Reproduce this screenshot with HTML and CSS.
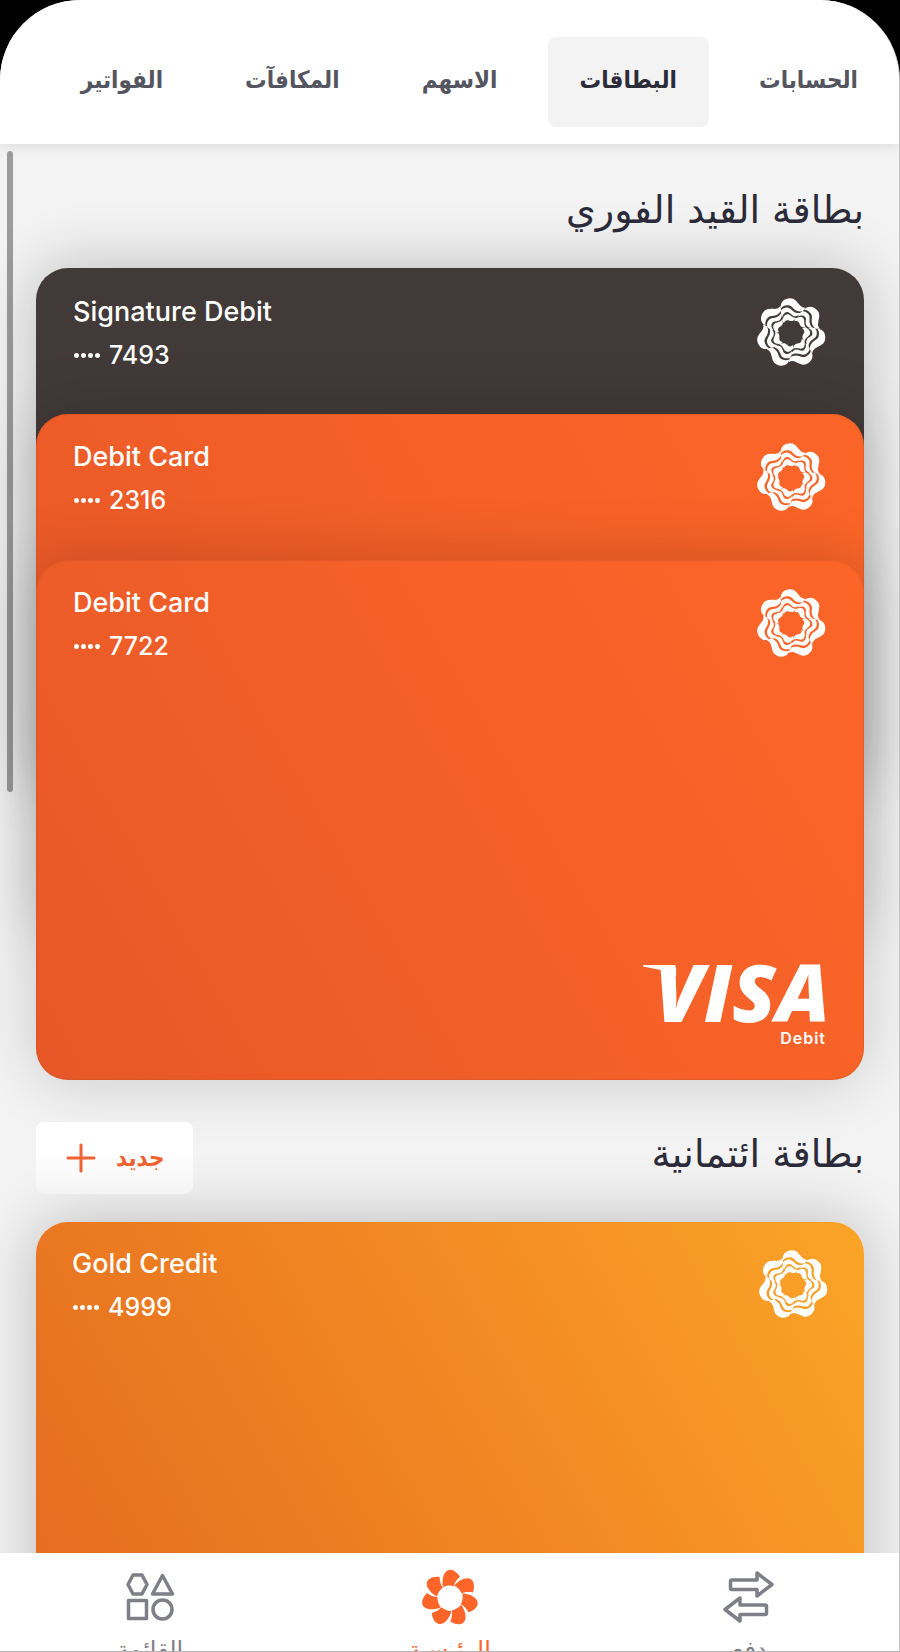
FILE: index.html
```html
<!DOCTYPE html>
<html lang="ar" dir="rtl">
<head>
<meta charset="utf-8">
<meta name="viewport" content="width=device-width, initial-scale=1">
<title>البطاقات</title>
<link rel="stylesheet" href="styles.css">
</head>
<body>
<svg class="defs" aria-hidden="true">
  <defs>
    <g id="wave">
      <path d="M-30-74C-34-92-20-104-2-104C11-104 17-94 24-86C30-78 36-75 44-76L36-66C24-63 16-66 8-73C2-79-2-84-11-83C-20-82-25-80-30-74Z"/>
      <path d="M-30-67C-25-74-17-77-9-76C2-74 8-57 28-60C24-52 13-48 6-52C-1-56-4-64-12-63C-20-62-24-56-26-47C-29-53-31-60-30-67Z"/>
      <path d="M-26-40C-22-51-17-58-9-56C0-54 4-44 15-46C10-36 2-34-5-37C-12-40-18-38-21-30C-24-33-26-36-26-40Z"/>
    </g>
    <symbol id="rosette" viewBox="-105 -105 210 210">
      <use href="#wave"/>
      <use href="#wave" transform="rotate(51.43)"/>
      <use href="#wave" transform="rotate(102.86)"/>
      <use href="#wave" transform="rotate(154.29)"/>
      <use href="#wave" transform="rotate(205.71)"/>
      <use href="#wave" transform="rotate(257.14)"/>
      <use href="#wave" transform="rotate(308.57)"/>
    </symbol>
    <path id="petal" d="M-21-33C-26-56-18-85 0-85C12-85 23-75 30-64C20-56 14-46 11-36C0-39-12-38-21-33Z"/>
  </defs>
</svg>
<div class="app">
  <header class="top">
    <nav class="tabs">
      <button class="tab" type="button">الحسابات</button>
      <button class="tab tab-active" type="button" aria-current="page">البطاقات</button>
      <button class="tab" type="button">الاسهم</button>
      <button class="tab" type="button">المكافآت</button>
      <button class="tab" type="button">الفواتير</button>
    </nav>
  </header>

  <main class="content">
    <div class="thumb"></div>
    <section class="group">
      <div class="group-head"><h2>بطاقة القيد الفوري</h2></div>
      <div class="stack">
        <article class="card card-dark" dir="ltr">
          <div class="card-text"><span>Signature Debit</span><span class="num"><i class="dots"></i>7493</span></div>
          <svg class="rosette"><use href="#rosette"/></svg>
        </article>
        <article class="card card-orange" dir="ltr">
          <div class="card-text"><span>Debit Card</span><span class="num"><i class="dots"></i>2316</span></div>
          <svg class="rosette"><use href="#rosette"/></svg>
        </article>
        <article class="card card-orange" dir="ltr">
          <div class="card-text"><span>Debit Card</span><span class="num"><i class="dots"></i>7722</span></div>
          <svg class="rosette"><use href="#rosette"/></svg>
          <div class="brand"><span class="visa">VISA</span><span class="brand-kind">Debit</span></div>
        </article>
      </div>
    </section>

    <section class="group group-credit">
      <div class="group-head">
        <h2>بطاقة ائتمانية</h2>
        <button class="new" type="button">جديد
          <svg class="plus" viewBox="0 0 30 30"><path d="M15 2V28M2 15H28"/></svg>
        </button>
      </div>
      <div class="stack">
        <article class="card card-gold" dir="ltr">
          <div class="card-text"><span>Gold Credit</span><span class="num"><i class="dots"></i>4999</span></div>
          <svg class="rosette"><use href="#rosette"/></svg>
        </article>
      </div>
    </section>
  </main>

  <nav class="bottom">
    <a class="item" href="#pay">
      <svg class="icon" viewBox="0 0 60 60"><g class="line"><path d="M13 12H38V5L53 16.500L38 28V21.500H13Q11.500 21.500 11.500 20V13.500Q11.500 12 13 12Z"/><path d="M46 37H21V30L6 41.500L21 53V46.500H46Q47.500 46.500 47.500 45V38.500Q47.500 37 46 37Z"/></g></svg>
      <span>دفع</span>
    </a>
    <a class="item item-active" href="#home" aria-current="page">
      <svg class="icon" viewBox="-90 -90 180 180">
        <use href="#petal"/>
        <use href="#petal" transform="rotate(51.43)"/>
        <use href="#petal" transform="rotate(102.86)"/>
        <use href="#petal" transform="rotate(154.29)"/>
        <use href="#petal" transform="rotate(205.71)"/>
        <use href="#petal" transform="rotate(257.14)"/>
        <use href="#petal" transform="rotate(308.57)"/>
      </svg>
      <span>الرئيسية</span>
    </a>
    <a class="item" href="#menu">
      <svg class="icon" viewBox="0 0 60 60"><g class="line"><path d="M13 7H22L27 16.500L22 26H13L8 16.500Z"/><path d="M42.500 7.500L52.500 26H32.500Z"/><rect x="8.500" y="32.500" width="18" height="18"/><circle cx="42.500" cy="41.500" r="9.500"/></g></svg>
      <span>القائمة</span>
    </a>
  </nav>
</div>
</body>
</html>
```
FILE: styles.css
```css
* { box-sizing: border-box; }
body {
  margin: 0;
  background: #000;
  color: #2b2b3a;
  font-family: "DejaVu Sans", "Noto Sans", sans-serif;
}
button { font: inherit; border: 0; cursor: pointer; }
.defs { display: block; width: 0; height: 0; }

.app {
  display: flex;
  flex-direction: column;
  height: 100vh;
  overflow: hidden;
  background: #f3f3f3;
  border-radius: 80px 80px 0 0;
  border-right: 1px solid #c4c4c4;
  border-bottom: 1px solid #b4b4b4;
  direction: ltr;
}
.top {
  flex: none;
  padding: 37px 9px 17px;
  background: #fff;
  box-shadow: 0 0 14px rgba(0, 0, 0, .13);
  z-index: 1;
}
.tabs { display: flex; direction: rtl; gap: 18px; }
.tab {
  height: 90px;
  padding: 0 32px 4px;
  border-radius: 8px;
  background: none;
  color: #555560;
  font-family: "DejaVu Sans Condensed", "DejaVu Sans", sans-serif;
  font-size: 24px;
  font-weight: 700;
  white-space: nowrap;
}
.tab-active { background: #f3f3f3; color: #2b2b3a; }

.content {
  position: relative;
  flex: 1;
  min-height: 0;
  overflow: hidden;
  padding: 0 35px 0 36px;
}
.thumb {
  position: absolute;
  left: 7px;
  top: 7px;
  width: 6px;
  height: 45.500%;
  border-radius: 3px;
  background: #9c9c9c;
}
.group-head {
  display: flex;
  direction: rtl;
  align-items: center;
  justify-content: space-between;
  height: 124px;
  padding-top: 8px;
}
.group-credit .group-head { height: 142px; padding-top: 14px; }
h2 {
  margin: 0;
  font-size: 38px;
  font-weight: 400;
  line-height: 48px;
}
.group-credit h2 { padding-bottom: 8px; }
.new {
  display: flex;
  position: relative;
  z-index: 1;
  align-items: center;
  gap: 20px;
  height: 72px;
  padding: 0 28px 0 30px;
  border-radius: 8px;
  background: linear-gradient(#fff 40%, #f4f4f4);
  color: #f0622f;
  font-family: "DejaVu Sans Condensed", "DejaVu Sans", sans-serif;
  font-size: 24px;
  font-weight: 700;
}
.plus { width: 30px; height: 30px; fill: none; stroke: #f0622f; stroke-width: 3; stroke-linecap: round; }

.card {
  display: grid;
  grid-template-columns: 1fr auto;
  grid-template-rows: auto 1fr;
  position: relative;
  height: 520px;
  padding: 30px 38px 32px 37px;
  border-radius: 32px;
  box-shadow: 0 0 64px rgba(0, 0, 0, .24);
  color: #fff;
  font-family: Inter, sans-serif;
}
.card + .card { margin-top: -374px; }
.card-dark { background: linear-gradient(#423a38, #423a38); }
.card-orange {
  padding-top: 29px;
  background: linear-gradient(60deg, #e75728, #f56128 60%, #fb6528);
  box-shadow: 0 0 64px rgba(0, 0, 0, .18), inset 0 0 2px #c44f26;
}
.card-gold {
  padding: 28px 36px;
  background: linear-gradient(60deg, #e2681f, #f08422 50%, #fba427);
}
.card-text {
  display: flex;
  flex-direction: column;
  font-size: 27px;
  font-weight: 500;
  line-height: 28px;
  gap: 15px;
}
.num { display: flex; align-items: center; gap: 8px; font-size: 25px; }
.dots {
  width: 28px;
  height: 5px;
  background: radial-gradient(circle, #fff 2px, transparent 3px) 0 0 / 7px 5px;
}
.rosette { width: 70px; height: 70px; fill: #fff; }
.brand {
  grid-column: 1 / 3;
  display: flex;
  flex-direction: column;
  align-items: flex-end;
  justify-content: flex-end;
}
.visa {
  position: relative;
  margin: 0 -4px 5px 0;
  font: italic 800 80px/64px "Open Sans", sans-serif;
}
.visa::before {
  content: "";
  position: absolute;
  right: 151px;
  top: 6px;
  width: 36px;
  height: 11px;
  background: #fff;
  clip-path: polygon(0 0, 86% 0, 92% 30%, 92% 100%, 74% 100%, 60% 52%, 0 14%);
}
.brand-kind { font-size: 16px; font-weight: 600; line-height: 20px; letter-spacing: 1px; }

.bottom {
  display: grid;
  grid-template-columns: repeat(3, 1fr);
  direction: rtl;
  flex: none;
  height: 98px;
  padding-top: 15px;
  overflow: hidden;
  background: #fff;
  z-index: 1;
}
.item {
  display: flex;
  flex-direction: column;
  align-items: center;
  gap: 6px;
  color: #7f7f88;
  font-size: 24px;
  line-height: 32px;
  text-decoration: none;
}
.item-active { color: #ff6428; }
.icon { flex: none; width: 60px; height: 60px; fill: currentColor; }
.line { fill: none; stroke: currentColor; stroke-width: 3.500; stroke-linejoin: round; }
```
